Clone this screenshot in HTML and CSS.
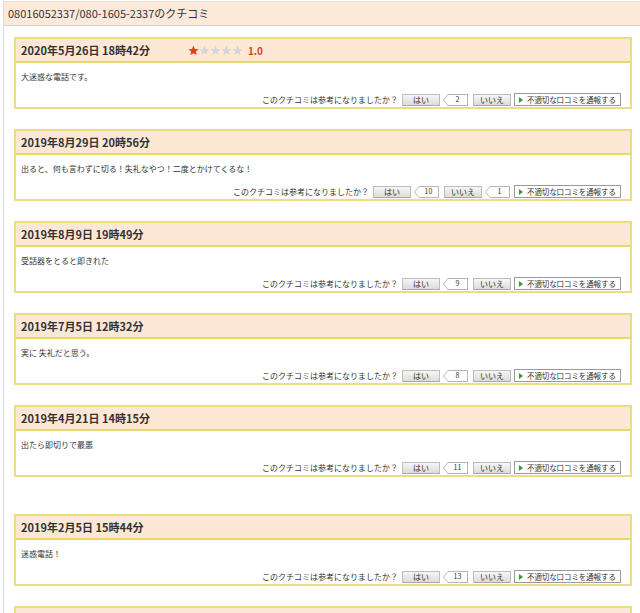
FILE: index.html
```html
<!DOCTYPE html>
<html lang="ja">
<head>
<meta charset="utf-8">
<title>クチコミ</title>
<link rel="stylesheet" href="styles.css">
</head>
<body>
<div class="wrap">
  <div class="page-title">08016052337/080-1605-2337のクチコミ</div>
  <div class="list">

    <div class="card">
      <div class="card-head">
        <span class="date">2020年5月26日 18時42分</span>
        <span class="rating">
          <svg class="star on" viewBox="0 0 20 20"><path d="M10 1l2.6 6.1 6.6.5-5 4.3 1.6 6.5L10 14.9l-5.8 3.5 1.6-6.5-5-4.3 6.6-.5z"/></svg><svg class="star" viewBox="0 0 20 20"><path d="M10 1l2.6 6.1 6.6.5-5 4.3 1.6 6.5L10 14.9l-5.8 3.5 1.6-6.5-5-4.3 6.6-.5z"/></svg><svg class="star" viewBox="0 0 20 20"><path d="M10 1l2.6 6.1 6.6.5-5 4.3 1.6 6.5L10 14.9l-5.8 3.5 1.6-6.5-5-4.3 6.6-.5z"/></svg><svg class="star" viewBox="0 0 20 20"><path d="M10 1l2.6 6.1 6.6.5-5 4.3 1.6 6.5L10 14.9l-5.8 3.5 1.6-6.5-5-4.3 6.6-.5z"/></svg><svg class="star" viewBox="0 0 20 20"><path d="M10 1l2.6 6.1 6.6.5-5 4.3 1.6 6.5L10 14.9l-5.8 3.5 1.6-6.5-5-4.3 6.6-.5z"/></svg>
          <span class="score">1.0</span>
        </span>
      </div>
      <div class="card-body">
        <p class="text">大迷惑な電話です。</p>
        <div class="vote">
          <span class="q">このクチコミは参考になりましたか？</span>
          <span class="btn">はい</span>
          <span class="count">2</span>
          <span class="btn">いいえ</span>
          <span class="report"><i class="tri"></i>不適切な口コミを通報する</span>
        </div>
      </div>
    </div>

    <div class="card">
      <div class="card-head"><span class="date">2019年8月29日 20時56分</span></div>
      <div class="card-body">
        <p class="text">出ると、何も言わずに切る！失礼なやつ！二度とかけてくるな！</p>
        <div class="vote">
          <span class="q">このクチコミは参考になりましたか？</span>
          <span class="btn">はい</span>
          <span class="count">10</span>
          <span class="btn">いいえ</span>
          <span class="count">1</span>
          <span class="report"><i class="tri"></i>不適切な口コミを通報する</span>
        </div>
      </div>
    </div>

    <div class="card">
      <div class="card-head"><span class="date">2019年8月9日 19時49分</span></div>
      <div class="card-body">
        <p class="text">受話器をとると即きれた</p>
        <div class="vote">
          <span class="q">このクチコミは参考になりましたか？</span>
          <span class="btn">はい</span>
          <span class="count">9</span>
          <span class="btn">いいえ</span>
          <span class="report"><i class="tri"></i>不適切な口コミを通報する</span>
        </div>
      </div>
    </div>

    <div class="card">
      <div class="card-head"><span class="date">2019年7月5日 12時32分</span></div>
      <div class="card-body">
        <p class="text">実に 失礼だと思う。</p>
        <div class="vote">
          <span class="q">このクチコミは参考になりましたか？</span>
          <span class="btn">はい</span>
          <span class="count">8</span>
          <span class="btn">いいえ</span>
          <span class="report"><i class="tri"></i>不適切な口コミを通報する</span>
        </div>
      </div>
    </div>

    <div class="card">
      <div class="card-head"><span class="date">2019年4月21日 14時15分</span></div>
      <div class="card-body">
        <p class="text">出たら即切りで最悪</p>
        <div class="vote">
          <span class="q">このクチコミは参考になりましたか？</span>
          <span class="btn">はい</span>
          <span class="count">11</span>
          <span class="btn">いいえ</span>
          <span class="report"><i class="tri"></i>不適切な口コミを通報する</span>
        </div>
      </div>
    </div>

    <div class="spacer"></div>

    <div class="card">
      <div class="card-head"><span class="date">2019年2月5日 15時44分</span></div>
      <div class="card-body">
        <p class="text">迷惑電話！</p>
        <div class="vote">
          <span class="q">このクチコミは参考になりましたか？</span>
          <span class="btn">はい</span>
          <span class="count">13</span>
          <span class="btn">いいえ</span>
          <span class="report"><i class="tri"></i>不適切な口コミを通報する</span>
        </div>
      </div>
    </div>

    <div class="card">
      <div class="card-head"></div>
      <div class="card-body"></div>
    </div>

  </div>
</div>
</body>
</html>
```

FILE: styles.css
```css
html, body {
  margin: 0;
  padding: 0;
  background: #fff;
}
body {
  font-family: "Noto Sans CJK JP", "Noto Sans", sans-serif;
  color: #333;
  overflow: hidden;
}
.wrap {
  margin: 1px 0 0 3px;
  border-left: 1px solid #dedede;
  border-top: 1px solid #e9ded5;
  min-height: 700px;
}
.page-title {
  height: 23px;
  line-height: 23px;
  padding-left: 4px;
  font-size: 11px;
  background: #fde9da;
  border-bottom: 1px solid #dcd2ca;
  color: #333;
}
.list {
  padding: 11px 0 0 10px;
}
.card {
  width: 618px;
  box-sizing: border-box;
  border: 2px solid #ecdd85;
  margin-bottom: 20px;
}
.spacer {
  height: 17px;
}
.card-head {
  height: 22px;
  background: #fde8d6;
  border-bottom: 2px solid #e9d66e;
  display: flex;
  align-items: center;
  padding-left: 5px;
}
.date {
  font-size: 11px;
  font-weight: bold;
  color: #333;
}
.rating {
  display: flex;
  align-items: center;
  margin-left: 38px;
}
.star {
  width: 11px;
  height: 11px;
  fill: #d6d6d6;
}
.star.on {
  fill: #e13d1b;
}
.score {
  margin-left: 5px;
  font-size: 10px;
  font-weight: bold;
  color: #cf4a1f;
}
.card-body {
  height: 44px;
  box-sizing: border-box;
  padding: 8px 9px 0 5px;
}
.text {
  margin: 0;
  font-size: 8px;
  line-height: 12px;
  height: 12px;
  color: #333;
}
.vote {
  margin-top: 10px;
  display: flex;
  justify-content: flex-end;
  align-items: center;
  height: 13px;
  font-size: 8px;
  white-space: nowrap;
}
.q {
  margin-right: 4px;
  color: #333;
}
.btn {
  width: 38px;
  height: 12px;
  box-sizing: border-box;
  border: 1px solid #bdbdbd;
  border-bottom-color: #a8a8a8;
  background: linear-gradient(#f6f6f6, #dcdcdc);
  display: flex;
  align-items: center;
  justify-content: center;
  line-height: 1;
  color: #333;
  margin-right: 4px;
}
.count {
  position: relative;
  margin-left: 4px;
  margin-right: 5px;
  min-width: 20px;
  height: 12px;
  box-sizing: border-box;
  padding: 0 5px;
  border: 1px solid #b5b5b5;
  border-left: none;
  background: #fff;
  display: flex;
  align-items: center;
  justify-content: center;
  line-height: 1;
  font-size: 7px;
}
.count::before {
  content: "";
  position: absolute;
  left: -5px;
  top: -1px;
  width: 0;
  height: 0;
  border-top: 6px solid transparent;
  border-bottom: 6px solid transparent;
  border-right: 5px solid #b5b5b5;
}
.count::after {
  content: "";
  position: absolute;
  left: -4px;
  top: 0;
  width: 0;
  height: 0;
  border-top: 5px solid transparent;
  border-bottom: 5px solid transparent;
  border-right: 4px solid #fff;
}
.report {
  width: 107px;
  height: 13px;
  box-sizing: border-box;
  border: 1px solid #9a9a9a;
  background: #fff;
  display: flex;
  align-items: center;
  padding-left: 4px;
  line-height: 1;
  font-size: 7.5px;
  letter-spacing: -0.1px;
  color: #333;
  margin-left: -1px;
  overflow: hidden;
}
.tri {
  flex: none;
  width: 0;
  height: 0;
  border-top: 3px solid transparent;
  border-bottom: 3px solid transparent;
  border-left: 4px solid #3a9a2a;
  margin-right: 4px;
}
```
